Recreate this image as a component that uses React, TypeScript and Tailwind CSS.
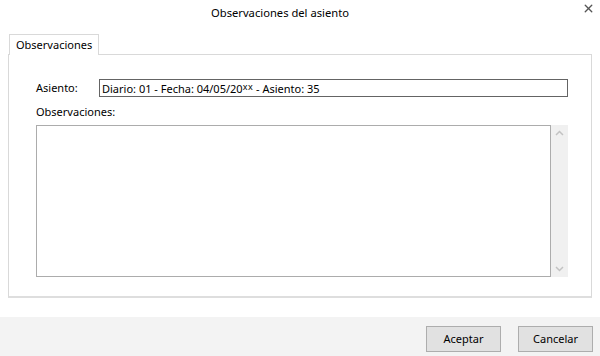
import { X } from "lucide-react"

export default function App() {
  return (
    <div
      className="w-[600px] h-[356px] bg-white flex flex-col text-[11px] text-[#000] overflow-hidden"
      style={{ fontFamily: '"Segoe UI", "Noto Sans", sans-serif' }}
    >
      {/* title bar */}
      <div className="relative h-[33px] flex items-start justify-center">
        <span className="mt-[5px] mr-[40px] text-[11.2px]">Observaciones del asiento</span>
        <button className="absolute right-[5px] top-[2px] text-[#555]">
          <X className="w-[13px] h-[13px]" strokeWidth={2.5} />
        </button>
      </div>

      {/* tabs */}
      <div className="flex px-[9px]">
        <div className="h-[21px] px-[6px] border border-b-0 border-[#d9d9d9] bg-white flex items-center relative top-[1px]">
          Observaciones
        </div>
      </div>

      {/* tab panel */}
      <div className="mx-[8px] h-[244px] border border-[#d9d9d9] border-b-2 border-b-[#dedede] pl-[27px] pr-[23px] pt-[24px] flex flex-col">
        <div className="flex items-center h-[18px]">
          <span className="w-[63px]">Asiento:</span>
          <div className="flex-1 h-[18px] border border-[#646464] px-[2px] flex items-center leading-none">
            Diario: 01 - Fecha: 04/05/20
            <span className="text-[9px] relative -top-[2px] tracking-[0.5px]">xx</span>
            &nbsp;- Asiento: 35
          </div>
        </div>
        <div className="mt-[6px] h-[18px] flex items-center">Observaciones:</div>
        <div className="mt-[4px] flex h-[152px]">
          <div className="flex-1 border border-[#acacac] bg-white" />
          <div className="w-[17px] bg-[#f0f0f0] flex flex-col items-center justify-between py-[5px]">
            <svg width="9" height="6" viewBox="0 0 9 6" className="text-[#c2c2c2]">
              <path d="M1 5 L4.5 1.5 L8 5" fill="none" stroke="currentColor" strokeWidth="1.5" />
            </svg>
            <svg width="9" height="6" viewBox="0 0 9 6" className="text-[#c2c2c2]">
              <path d="M1 1 L4.5 4.5 L8 1" fill="none" stroke="currentColor" strokeWidth="1.5" />
            </svg>
          </div>
        </div>
      </div>

      <div className="flex-1" />

      {/* footer */}
      <div className="h-[39px] bg-[#f3f3f3] flex items-start justify-end gap-[17px] pr-[7px] pt-[9px]">
        <button className="w-[75px] h-[26px] border border-[#adadad] bg-[#e1e1e1]">Aceptar</button>
        <button className="w-[75px] h-[26px] border border-[#adadad] bg-[#e1e1e1]">Cancelar</button>
      </div>
    </div>
  )
}
